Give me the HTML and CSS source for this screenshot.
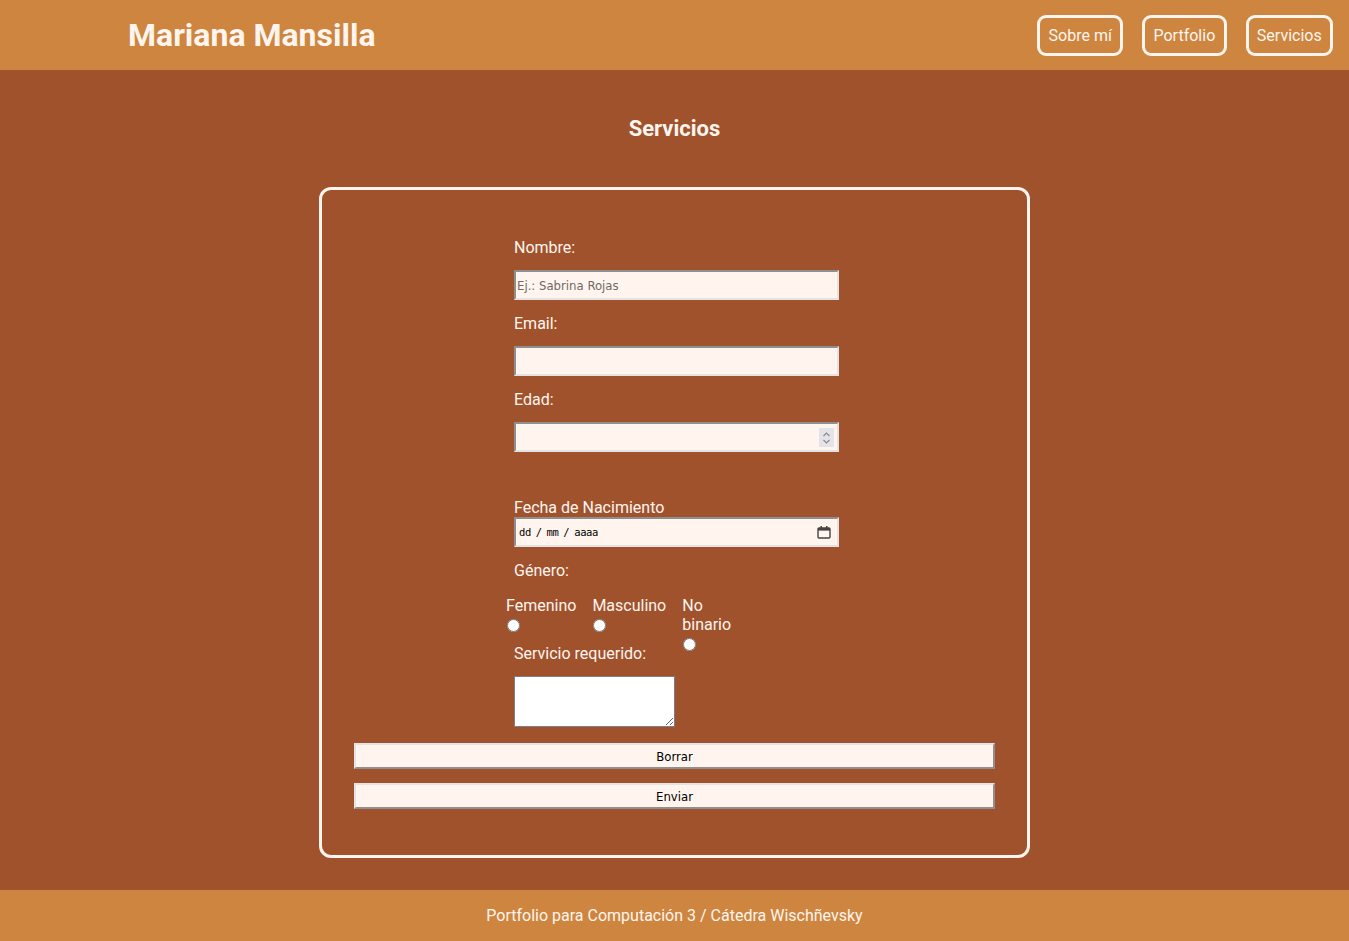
FILE: index.html
```html
<!DOCTYPE html>
<html lang="es">
<head>
<meta charset="utf-8">
<title>Servicios</title>
<link rel="stylesheet" href="styles.css">
</head>
<body>
<header class="topbar">
  <h1 class="brand">Mariana Mansilla</h1>
  <nav class="nav">
    <a class="nav-link" href="#">Sobre mí</a>
    <a class="nav-link" href="#">Portfolio</a>
    <a class="nav-link" href="#">Servicios</a>
  </nav>
</header>
<main class="main">
  <h2 class="page-title">Servicios</h2>
  <form class="card">
    <div class="fields">
      <label class="lbl" for="nombre">Nombre:</label>
      <input class="txt" id="nombre" type="text" placeholder="Ej.: Sabrina Rojas">
      <label class="lbl" for="email">Email:</label>
      <input class="txt" id="email" type="email">
      <label class="lbl" for="edad">Edad:</label>
      <div class="num-wrap">
        <input class="txt txt-num" id="edad" type="text">
        <span class="spin">
          <svg width="9" height="14" viewBox="0 0 9 14"><path d="M1.5 5 L4.5 2 L7.5 5 M1.5 9 L4.5 12 L7.5 9" fill="none" stroke="#8a8a92" stroke-width="1.2"/></svg>
        </span>
      </div>
      <label class="lbl lbl-fecha" for="fecha">Fecha de Nacimiento</label>
      <div class="date" id="fecha">
        <span class="date-text">dd / mm / aaaa</span>
        <svg class="cal" width="14" height="13" viewBox="0 0 14 13"><rect x="1" y="2" width="12" height="10" rx="1" fill="none" stroke="#444" stroke-width="1.4"/><rect x="1" y="2" width="12" height="2.6" fill="#444"/><rect x="3.5" y="0" width="1.5" height="3" fill="#444"/><rect x="9" y="0" width="1.5" height="3" fill="#444"/></svg>
      </div>
      <span class="lbl lbl-genero">Género:</span>
      <div class="radios">
        <label class="opt"><span>Femenino</span><input type="radio" name="g"></label>
        <label class="opt"><span>Masculino</span><input type="radio" name="g"></label>
        <label class="opt opt-narrow"><span>No binario</span><input type="radio" name="g"></label>
      </div>
      <label class="lbl lbl-serv" for="serv">Servicio requerido:</label>
      <textarea class="area" id="serv"></textarea>
    </div>
    <input class="btn btn-first" type="reset" value="Borrar">
    <input class="btn" type="submit" value="Enviar">
  </form>
</main>
<footer class="foot">Portfolio para Computación 3 / Cátedra Wischñevsky</footer>
</body>
</html>
```
FILE: styles.css
```css
* { box-sizing: border-box; }
html, body { margin: 0; padding: 0; }
body {
  font-family: Roboto, "Liberation Sans", sans-serif;
  color: #fff5ee;
  background: #a0522d;
}
.topbar {
  height: 70px;
  background: #cd853f;
  display: flex;
  align-items: center;
  justify-content: space-between;
  padding: 0 16px 0 128px;
}
.brand {
  margin: 0;
  font-size: 32px;
  font-weight: 700;
  color: #fff5ee;
}
.nav { display: flex; gap: 19px; }
.nav-link {
  color: #fff5ee;
  text-decoration: none;
  font-size: 16px;
  border: 3px solid #fff5ee;
  border-radius: 9px;
  height: 41px;
  display: flex;
  align-items: center;
  padding: 0 8.3px;
}
.main {
  padding: 46px 0 32px;
  display: flex;
  flex-direction: column;
  align-items: center;
}
.page-title {
  margin: 0 0 46px;
  font-size: 22px;
  font-weight: 700;
  line-height: 25px;
}
.card {
  width: 711px;
  border: 3px solid #fff5ee;
  border-radius: 12px;
  padding: 46px 32px 46px;
  display: flex;
  flex-direction: column;
}
.fields {
  width: 325px;
  margin-left: 160px;
  display: flex;
  flex-direction: column;
  align-items: flex-start;
}
.lbl {
  font-size: 16px;
  line-height: 19px;
  margin: 2px 0 13px;
}
.txt {
  width: 325px;
  height: 30px;
  background: #fff5ee;
  margin: 0 0 12px;
  border: 2px solid;
  border-color: #8f8f8f #e3e3e3 #e3e3e3 #8f8f8f;
  padding: 1px 1px;
  font-family: "DejaVu Sans Condensed", "DejaVu Sans", sans-serif;
  font-stretch: condensed;
  font-size: 13px;
  color: #000;
}
.txt::placeholder { color: #6f6a68; }
.num-wrap { position: relative; }
.spin {
  position: absolute;
  top: 6px;
  right: 5px;
  width: 15px;
  height: 19px;
  background: #e4e3e8;
  display: flex;
  align-items: center;
  justify-content: center;
}
.lbl-fecha { margin: 34px 0 0; }
.date {
  width: 325px;
  height: 30px;
  background: #fff5ee;
  border: 2px solid;
  border-color: #8f8f8f #e3e3e3 #e3e3e3 #8f8f8f;
  display: flex;
  align-items: center;
  justify-content: space-between;
  padding: 0 6px 0 3px;
  margin-bottom: 12px;
}
.date-text {
  font-family: "DejaVu Sans Mono", monospace;
  font-size: 10.5px;
  letter-spacing: -0.4px;
  word-spacing: -1px;
  color: #000;
}
.cal { display: block; }
.radios {
  display: flex;
  gap: 16px;
  margin: 3px 0 0 -8px;
  height: 46px;
  align-items: flex-start;
}
.opt {
  display: flex;
  flex-direction: column;
  align-items: flex-start;
  font-size: 16px;
  line-height: 19px;
}
.opt input { margin: 4px 0 0 1px; }
.opt-narrow { width: 52px; }
.lbl-serv { margin-bottom: 13px; }
.area {
  width: 161px;
  height: 51px;
  background: #fff;
  border: 1px solid #7a7f8e;
  margin: 0 0 16px;
}
.btn {
  width: 641px;
  height: 26px;
  background: #fff5ee;
  color: #000;
  margin: 0 0 14px;
  border: 2px solid;
  border-color: #e3e3e3 #8f8f8f #8f8f8f #e3e3e3;
  font-family: "DejaVu Sans Condensed", "DejaVu Sans", sans-serif;
  font-stretch: condensed;
  font-size: 13px;
}
.btn:last-child { margin-bottom: 0; }
.foot {
  height: 51px;
  background: #cd853f;
  display: flex;
  align-items: center;
  justify-content: center;
  font-size: 16px;
}
```
